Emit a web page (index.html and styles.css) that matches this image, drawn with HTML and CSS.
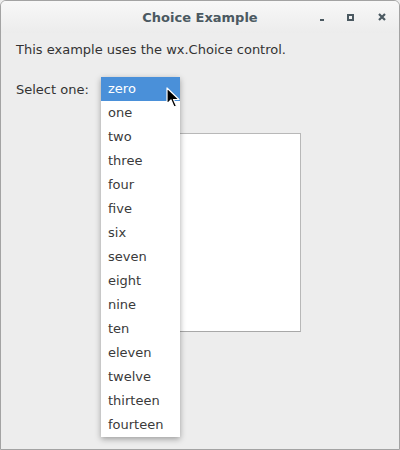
FILE: index.html
```html
<!DOCTYPE html>
<html>
<head>
<meta charset="utf-8">
<link rel="stylesheet" href="styles.css">
</head>
<body>
<div class="window">
  <div class="titlebar">
    <div class="title">Choice Example</div>
    <div class="controls">
      <span class="ctl min"></span>
      <span class="ctl max"></span>
      <span class="ctl close">
        <svg width="8" height="8" viewBox="0 0 8 8"><path d="M1 1L7 7M7 1L1 7" stroke="#4b5961" stroke-width="2.2"/></svg>
      </span>
    </div>
  </div>
  <div class="content">
    <p class="intro">This example uses the wx.Choice control.</p>
    <div class="row">
      <span class="label">Select one:</span>
      <div class="choice-area">
        <div class="textbox"></div>
        <ul class="dropdown">
          <li class="selected">zero</li>
          <li>one</li>
          <li>two</li>
          <li>three</li>
          <li>four</li>
          <li>five</li>
          <li>six</li>
          <li>seven</li>
          <li>eight</li>
          <li>nine</li>
          <li>ten</li>
          <li>eleven</li>
          <li>twelve</li>
          <li>thirteen</li>
          <li>fourteen</li>
        </ul>
        <svg class="cursor" width="14" height="22" viewBox="0 0 14 22">
          <path d="M1 1 L1 17 L5 13 L8 20 L10.5 19 L7.5 12.5 L13 12.5 Z" fill="#000" stroke="#fff" stroke-width="1.2" stroke-linejoin="round"/>
        </svg>
      </div>
    </div>
  </div>
</div>
</body>
</html>
```

FILE: styles.css
```css
html, body {
  margin: 0;
  padding: 0;
  background: #ededed;
}
.window {
  width: 400px;
  height: 450px;
  box-sizing: border-box;
  border: 1px solid #a3a3a3;
  border-radius: 6px 6px 0 0;
  background: #ededed;
  font-family: "DejaVu Sans", sans-serif;
  font-size: 13px;
  color: #333;
  overflow: hidden;
}
.titlebar {
  height: 32px;
  position: relative;
  background: linear-gradient(#f8f8f8, #ececec);
  display: flex;
  align-items: center;
  justify-content: center;
}
.title {
  font-weight: bold;
  font-size: 13px;
  color: #4b5961;
}
.controls {
  position: absolute;
  right: 0;
  top: 0;
  height: 32px;
  display: flex;
  align-items: center;
}
.ctl {
  display: block;
  width: 8px;
  height: 8px;
  margin-left: 22px;
  position: relative;
}
.ctl.min { margin-left: 0; }
.ctl.min::after {
  content: "";
  position: absolute;
  left: 2px;
  bottom: 0;
  width: 4px;
  height: 2px;
  background: #4b5961;
}
.ctl.max {
  box-sizing: border-box;
  width: 7px;
  height: 7px;
  border: 2px solid #4b5961;
  margin-left: 21px;
}
.ctl.close { margin-right: 13px; margin-left: 24px; }
.ctl svg { display: block; }
.content {
  padding: 0 15px;
}
.intro {
  margin: 9px 0 0 0;
  line-height: 16px;
}
.row {
  display: flex;
  margin-top: 23px;
}
.label {
  line-height: 16px;
  margin-top: 1px;
  width: 85px;
}
.choice-area {
  position: relative;
  flex: 1;
}
.textbox {
  margin-top: 52px;
  margin-left: 78px;
  width: 122px;
  height: 199px;
  box-sizing: border-box;
  background: #fff;
  border: 1px solid #b8b8b8;
  border-bottom-color: #a8a8a8;
}
.dropdown {
  position: absolute;
  left: 0;
  top: -4px;
  width: 79px;
  margin: 0;
  padding: 0;
  list-style: none;
  background: #fff;
  box-shadow: 0 2px 6px rgba(0,0,0,0.35);
}
.dropdown li {
  height: 24px;
  line-height: 24px;
  padding-left: 7px;
  color: #3a3a3a;
}
.dropdown li.selected {
  background: #4a90d9;
  color: #fff;
}
.cursor {
  position: absolute;
  left: 65px;
  top: 6px;
}
```
